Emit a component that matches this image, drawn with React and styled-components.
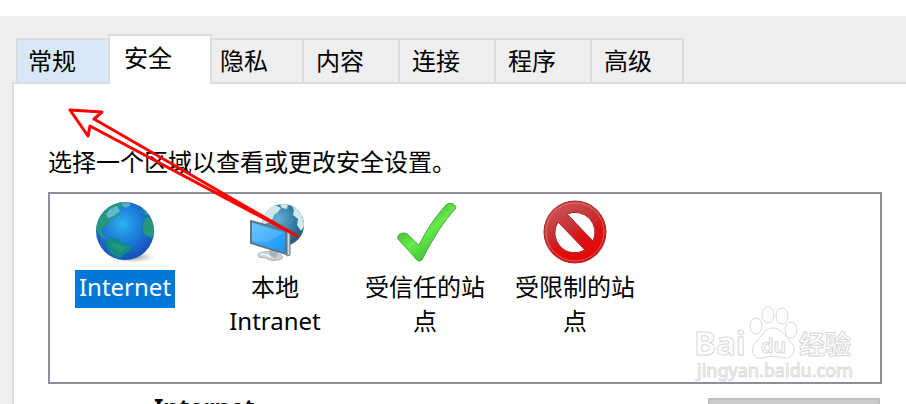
import { useState } from "react";
import styled, { createGlobalStyle } from "styled-components";

const GlobalStyle = createGlobalStyle`
  * {
    box-sizing: border-box;
  }

  body {
    margin: 0;
    background: #fff;
    overflow: hidden;
  }

  body, button {
    color: #000;
    font-family: "Noto Sans", "Noto Sans CJK SC", sans-serif;
    font-size: 24px;
  }
`;

const Page = styled.main`
  display: flex;
  flex-direction: column;
  height: 100vh;
  padding-top: 16px;
`;

const Dialog = styled.div`
  position: relative;
  display: flex;
  flex: 1;
  flex-direction: column;
  min-height: 0;
  padding: 18px 0 0 12px;
  background: #efefef;
`;

const TabList = styled.div`
  display: flex;
  align-items: flex-end;
  padding-left: 4px;
`;

const Tab = styled.button`
  width: 96px;
  height: 44px;
  padding: 0 0 0 12px;
  border: solid #dcdcdc;
  border-width: 2px 2px 0 0;
  background: #efefef;
  line-height: 32px;
  text-align: left;

  &:first-child {
    padding-left: 10px;
    border-left-width: 2px;
    background: #d8e8f7;
  }

  &:last-child {
    width: 92px;
  }

  &[aria-selected="true"] {
    z-index: 1;
    width: 104px;
    height: 50px;
    margin: 0 -4px -2px;
    padding: 0 0 4px 14px;
    border-left-width: 2px;
    background: #fff;
  }
`;

const Pane = styled.section`
  flex: 1;
  min-height: 0;
  padding: 62px 24px 0 34px;
  border: solid #dcdcdc;
  border-width: 2px 0 0 2px;
  background: #fff;
  overflow: hidden;
`;

const Caption = styled.p`
  margin: 0;
  line-height: 32px;
`;

const ZoneList = styled.div`
  position: relative;
  display: flex;
  height: 192px;
  margin-top: 14px;
  border: 2px solid #8b909b;
`;

const Zone = styled.button`
  display: flex;
  flex-direction: column;
  align-items: center;
  width: 150px;
  padding: 6px 10px 0;
  border: 0;
  background: none;
`;

const ZoneLabel = styled.span`
  margin-top: 6px;
  padding: 0 4px 4px;
  background: ${props => (props.$selected ? "#0078d7" : "transparent")};
  color: ${props => (props.$selected ? "#fff" : "#000")};
  line-height: 34px;
`;

const ZoneIcon = styled.svg`
  flex: none;
  width: 64px;
  height: 64px;
`;

const Details = styled.div`
  display: flex;
  align-items: flex-start;
  justify-content: space-between;
  margin: 14px 2px 0 106px;
`;

const ZoneName = styled.h2`
  margin: 0;
  font-size: 24px;
  line-height: 18px;
`;

const SitesButton = styled.button`
  width: 172px;
  height: 46px;
  border: 2px solid #bfbfbf;
  background: #cccccc;
`;

const Watermark = styled.svg`
  position: absolute;
  right: 20px;
  bottom: -2px;
  width: 168px;
  height: 80px;
  pointer-events: none;
`;

const Arrow = styled.svg`
  position: absolute;
  top: 86px;
  left: 64px;
  width: 240px;
  height: 140px;
  pointer-events: none;
`;

const GlobeIcon = () => (
  <ZoneIcon viewBox="0 0 64 64" aria-hidden="true">
    <defs>
      <radialGradient id="sea" cx="45%" cy="38%" r="62%">
        <stop offset="0" stopColor="#2fb0ee" />
        <stop offset="0.5" stopColor="#1c7ddb" />
        <stop offset="1" stopColor="#154fb8" />
      </radialGradient>
      <radialGradient id="shade">
        <stop offset="0" stopColor="#555" stopOpacity="0.7" />
        <stop offset="1" stopColor="#999" stopOpacity="0" />
      </radialGradient>
      <clipPath id="globe">
        <circle cx="32" cy="31" r="29" />
      </clipPath>
    </defs>
    <ellipse cx="39" cy="57" rx="24" ry="6" fill="url(#shade)" />
    <circle cx="32" cy="31" r="29" fill="url(#sea)" />
    <g clipPath="url(#globe)">
      <path
        d="M3 27 7 16 18 5 28 2 29 7 25 9 28 13 22 18 18 19 15 25 10 27 8 32 13 38 10 38 4 32Z"
        fill="#27977d"
      />
      <path d="M17 9 24 6 27 11 21 16 15 18 13 14Z" fill="#62b9cb" />
      <path d="M29 3 35 2 38 5 33 8 29 6Z" fill="#54adc9" />
      <path
        d="M13 41 17 38 24 39 29 43 39 46 37 51 31 54 28 58 22 57 17 52 14 47Z"
        fill="#168b80"
        stroke="#1679a5"
      />
      <path d="M18 42 26 44 33 48 27 52 20 48Z" fill="#1f9a7d" />
      <path
        d="M51 20 55 16 61 23 62 36 58 38 52 35 49 29Z"
        fill="#27977d"
        stroke="#1679a5"
      />
      <path d="M48 9 52 9 56 14 52 16 49 13Z" fill="#2d9c90" />
      <path d="m47 6 5 9-2 6" fill="none" stroke="#1679bb" strokeWidth="2" />
    </g>
  </ZoneIcon>
);

const IntranetIcon = () => (
  <ZoneIcon viewBox="0 0 64 64" aria-hidden="true">
    <defs>
      <radialGradient id="network" cx="38%" cy="36%" r="65%">
        <stop offset="0" stopColor="#65b3d3" />
        <stop offset="0.6" stopColor="#347ea5" />
        <stop offset="1" stopColor="#265c7c" />
      </radialGradient>
      <linearGradient id="screen" x2="1" y2="1">
        <stop offset="0" stopColor="#61c0ff" />
        <stop offset="0.5" stopColor="#35a8fb" />
        <stop offset="1" stopColor="#1696f4" />
      </linearGradient>
      <clipPath id="network-edge">
        <circle cx="40" cy="25" r="21" />
      </clipPath>
    </defs>
    <circle cx="40" cy="25" r="21" fill="url(#network)" />
    <g clipPath="url(#network-edge)" fill="#d0e7ec">
      <path d="M18 25 24 8 32 5 38 8 35 12 31 15 29 20 25 23Z" />
      <path d="m36 3 9 1-1 5-5-1Z" />
      <path d="m49 6 8 5 5 14-4 6-4-6 1-6-5-4 1-5Z" />
    </g>
    <path
      d="M15 54C19 51 25 52 28 51L38 55C42 58 38 60 34 60C30 61 25 60 23 58L16 57Z"
      fill="#c9d1d6"
      stroke="#aab5bc"
    />
    <path d="m27 49 8 3-2 6-7-2Z" fill="#a9b4bd" />
    <path d="m17 54 7 1 4 2" fill="none" stroke="#eef3f5" strokeWidth="2" />
    <path
      d="m8 21 35 10v23L8 43Z"
      fill="url(#screen)"
      stroke="#5d7484"
      strokeWidth="2"
    />
    <path d="m9 23 32 10-17 9-15-1Z" fill="#8ad0ff" opacity="0.3" />
    <path d="m44 31 3-1v25l-3 1Z" fill="#cdd6dc" stroke="#637580" />
  </ZoneIcon>
);

const CheckIcon = () => (
  <ZoneIcon viewBox="0 0 64 64" aria-hidden="true">
    <defs>
      <linearGradient id="check" x1="0.1" y1="0.2" x2="0.7" y2="1">
        <stop offset="0" stopColor="#2eaa22" />
        <stop offset="0.48" stopColor="#67e94c" />
        <stop offset="0.75" stopColor="#49cf38" />
        <stop offset="1" stopColor="#20981c" />
      </linearGradient>
    </defs>
    <path
      d="M5 39C4 35 7 33 11 33C16 33 20 41 26 45C34 29 43 16 53 5C56 2 62 3 63 8C51 21 40 38 30 58C29 61 26 62 24 60C18 53 11 46 5 39Z"
      fill="url(#check)"
      stroke="#4da442"
    />
  </ZoneIcon>
);

const RestrictedIcon = () => (
  <ZoneIcon viewBox="0 0 64 64" aria-hidden="true">
    <defs>
      <linearGradient id="ban" x1="0.2" y1="0" x2="0.7" y2="1">
        <stop offset="0" stopColor="#cc575a" />
        <stop offset="0.45" stopColor="#c72f31" />
        <stop offset="0.6" stopColor="#d91416" />
        <stop offset="1" stopColor="#e60505" />
      </linearGradient>
    </defs>
    <path
      fill="url(#ban)"
      fillRule="evenodd"
      stroke="#a3282b"
      d="M32 1a31 31 0 1 1 0 62a31 31 0 1 1 0-62ZM24 14 50 41A20 20 0 0 0 24 14ZM15 22A20 20 0 0 0 42 50Z"
    />
    <circle cx="32" cy="32" r="29" fill="none" stroke="#e9797a" opacity="0.7" />
  </ZoneIcon>
);

const BaiduMark = () => (
  <Watermark viewBox="0 0 168 80" aria-label="Baidu 经验">
    <g fill="#fff" stroke="#d8d8d8" fontFamily="Noto Sans, Noto Sans CJK SC, sans-serif">
      <text x="2" y="51" fontSize="33" fontWeight="700">
        Bai
      </text>
      <ellipse cx="64" cy="22" rx="6" ry="8" />
      <ellipse cx="76" cy="11" rx="6" ry="8" />
      <ellipse cx="90" cy="12" rx="6" ry="8" />
      <ellipse cx="99" cy="26" rx="6" ry="8" />
      <path d="M81 24C89 24 92 31 98 37C106 45 101 55 92 54C84 52 80 52 71 54C61 56 57 46 64 38C70 32 73 24 81 24Z" />
      <text x="69" y="49" fontSize="20" fontWeight="600">
        du
      </text>
      <text x="107" y="50" fontSize="26" fontWeight="700">
        经验
      </text>
    </g>
    <text
      x="5"
      y="73"
      fill="#fff"
      stroke="#dcdcdc"
      fontFamily="Noto Sans, sans-serif"
      fontSize="18"
    >
      jingyan.baidu.com
    </text>
  </Watermark>
);

const tabs = ["常规", "安全", "隐私", "内容", "连接", "程序", "高级"];

const zones = [
  { name: "Internet", Icon: GlobeIcon },
  { name: "本地 Intranet", Icon: IntranetIcon },
  { name: "受信任的站点", Icon: CheckIcon },
  { name: "受限制的站点", Icon: RestrictedIcon },
];

const App = () => {
  const [tab, setTab] = useState("安全");
  const [zone, setZone] = useState("Internet");

  return (
    <Page>
      <GlobalStyle />
      <Dialog>
        <TabList role="tablist">
          {tabs.map(item => (
            <Tab
              key={item}
              role="tab"
              aria-selected={item === tab}
              onClick={() => setTab(item)}
            >
              {item}
            </Tab>
          ))}
        </TabList>
        <Pane role="tabpanel" aria-label={tab}>
          <Caption id="zone-caption">选择一个区域以查看或更改安全设置。</Caption>
          <ZoneList role="group" aria-labelledby="zone-caption">
            {zones.map(({ name, Icon }) => (
              <Zone
                key={name}
                aria-pressed={name === zone}
                onClick={() => setZone(name)}
              >
                <Icon />
                <ZoneLabel $selected={name === zone}>{name}</ZoneLabel>
              </Zone>
            ))}
            <BaiduMark />
          </ZoneList>
          <Details>
            <ZoneName>{zone}</ZoneName>
            <SitesButton disabled aria-label="站点" />
          </Details>
        </Pane>
        <Arrow viewBox="0 0 240 140" aria-hidden="true">
          <path
            d="M6 8 38 10 30 17 233 134 26 24 24 34Z"
            fill="none"
            stroke="#f00"
            strokeWidth="3"
            strokeLinejoin="round"
          />
        </Arrow>
      </Dialog>
    </Page>
  );
};

export default App;
